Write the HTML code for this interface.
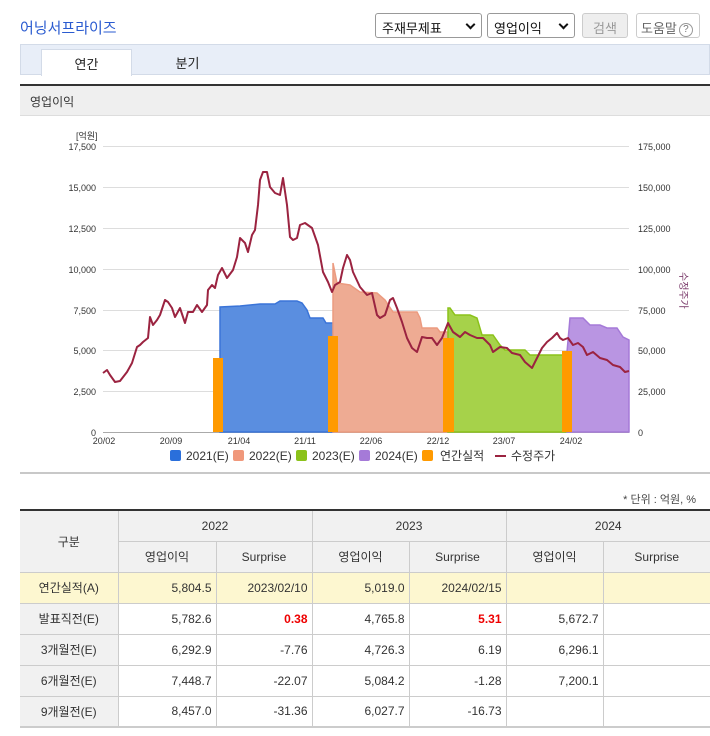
<!DOCTYPE html>
<html><head><meta charset="utf-8"><style>
*{margin:0;padding:0;box-sizing:border-box}
body{width:710px;height:736px;background:#fff;font-family:"Liberation Sans","Noto Sans CJK KR",sans-serif;font-size:12px;color:#333;position:relative;overflow:hidden}
.abs{position:absolute}
.title{left:20px;top:17px;font-size:15px;color:#2a5bd0}
.sel{top:13px;height:25px;border:1px solid #999;border-radius:3px;background:#fff;font-size:13px;color:#111;padding:4px 0 0 6px}
.sel:after{content:"";position:absolute;right:7px;top:7px;width:5px;height:5px;border-right:2px solid #111;border-bottom:2px solid #111;transform:rotate(45deg)}
.btn{top:13px;height:25px;border:1px solid #ccc;border-radius:3px;font-size:13px;color:#999;text-align:center;padding-top:4px;white-space:nowrap}
.tabs{left:20px;top:44px;width:690px;height:31px;background:#e8eef8;border:1px solid #d3dbe8}
.tab{top:49px;height:27px;font-size:13px;text-align:center;padding-top:4px;color:#222}
table{position:absolute;left:20px;top:509px;width:690px;border-collapse:collapse;border-top:2px solid #333;border-bottom:2px solid #ccc;table-layout:fixed}
td{border:1px solid #ccc;height:31px;font-size:12px;text-align:right;padding-right:4px;color:#333}
tr.h td{background:#f1f1f1;text-align:center;padding:0}
td.l{background:#f1f1f1;text-align:center;padding:0;border-left:none}
tr.y td{background:#fdf7d0}
.r{color:#e00;font-weight:bold}
</style></head><body>
<div class="abs title">어닝서프라이즈</div>
<div class="abs sel" style="left:375px;width:107px">주재무제표</div>
<div class="abs sel" style="left:487px;width:88px">영업이익</div>
<div class="abs btn" style="left:582px;width:46px;background:#eee">검색</div>
<div class="abs btn" style="left:636px;width:64px;color:#666;text-align:left;padding-left:4px">도움말<span style="display:inline-block;margin-left:2px;width:14px;height:14px;border:1px solid #999;border-radius:50%;font-size:10px;text-align:center;line-height:12px;color:#777;vertical-align:1px">?</span></div>
<div class="abs tabs"></div>
<div class="abs tab" style="left:41px;width:91px;background:#fff;border:1px solid #d3dbe8;border-bottom:none">연간</div>
<div class="abs tab" style="left:142px;width:91px">분기</div>
<div class="abs" style="left:20px;top:84px;width:690px;height:2px;background:#333"></div>
<div class="abs" style="left:20px;top:86px;width:690px;height:30px;background:#efefef;border-bottom:1px solid #ddd;padding:7px 0 0 10px;font-size:12px">영업이익</div>

<svg class="abs" style="left:0;top:0" width="710" height="480" font-family="Liberation Sans, sans-serif" font-size="9" fill="#333">
<g stroke="#ddd" stroke-width="1">
<line x1="103" x2="629" y1="146.5" y2="146.5"/><line x1="103" x2="629" y1="187.5" y2="187.5"/><line x1="103" x2="629" y1="228.5" y2="228.5"/><line x1="103" x2="629" y1="269.5" y2="269.5"/><line x1="103" x2="629" y1="310.5" y2="310.5"/><line x1="103" x2="629" y1="350.5" y2="350.5"/><line x1="103" x2="629" y1="391.5" y2="391.5"/>
</g>
<line x1="103" x2="629" y1="432.5" y2="432.5" stroke="#aaa"/>
<g text-anchor="end">
<text x="96" y="150">17,500</text><text x="96" y="191">15,000</text><text x="96" y="232">12,500</text><text x="96" y="273">10,000</text><text x="96" y="314">7,500</text><text x="96" y="354">5,000</text><text x="96" y="395">2,500</text><text x="96" y="436">0</text>
</g>
<text x="76" y="139">[억원]</text>
<g>
<text x="638" y="150">175,000</text><text x="638" y="191">150,000</text><text x="638" y="232">125,000</text><text x="638" y="273">100,000</text><text x="638" y="314">75,000</text><text x="638" y="354">50,000</text><text x="638" y="395">25,000</text><text x="638" y="436">0</text>
</g>
<text transform="translate(680,272) rotate(90)" fill="#7a3a6a" font-size="10" font-family="Noto Sans CJK KR, sans-serif">수정주가</text>
<g text-anchor="middle">
<text x="104" y="444">20/02</text><text x="171" y="444">20/09</text><text x="239" y="444">21/04</text><text x="305" y="444">21/11</text><text x="371" y="444">22/06</text><text x="438" y="444">22/12</text><text x="504" y="444">23/07</text><text x="571" y="444">24/02</text>
</g>
<path d="M220,432 L220,307 L240,306 L260,304 L275,304 L280,301 L297,301 L302,303 L307,310 L310,318 L323,318 L326,323 L333,323 L333,432Z" fill="#5a8ee0" stroke="#3a74d8" stroke-width="1.5"/>
<path d="M333,432 L333,263 L337,283 L350,285 L360,292 L377,293 L385,300 L393,312 L417,312 L420,318 L422,328 L437,328 L440,332 L448,332 L448,432Z" fill="#eeab93" stroke="#ec9b80" stroke-width="1.5"/>
<path d="M448,432 L448,308 L450,308 L455,315 L470,315 L477,318 L482,335 L493,335 L500,345 L505,350 L525,350 L530,355 L567,355 L567,432Z" fill="#a6d24a" stroke="#8bc21a" stroke-width="1.5"/>
<path d="M567,432 L567,352 L570,318 L583,318 L590,325 L600,325 L607,328 L617,328 L623,337 L629,340 L629,432Z" fill="#b995e2" stroke="#a57ad8" stroke-width="1.5"/>
<rect x="213" y="358" width="10" height="74" fill="#ff9a00"/>
<rect x="328" y="336" width="10" height="96" fill="#ff9a00"/>
<rect x="443" y="338" width="11" height="94" fill="#ff9a00"/>
<rect x="562" y="351" width="10" height="81" fill="#ff9a00"/>
<polyline fill="none" stroke="#9b2340" stroke-width="2" stroke-linejoin="round" points="103,373 107,370 110,375 115,382 120,381 127,372 132,363 137,347 140,345 143,342 148,338 150,317 153,325 157,320 160,315 165,300 168,302 172,308 175,317 180,308 185,323 188,312 193,312 197,305 202,312 207,305 208,290 212,285 215,288 218,275 222,268 227,278 233,270 237,257 240,238 245,243 248,252 252,235 255,230 258,205 260,180 263,172 267,172 270,187 275,193 280,195 283,178 287,205 290,237 293,240 297,238 300,225 305,223 312,228 318,245 323,272 328,282 332,292 335,285 340,282 343,268 347,255 350,260 353,272 360,287 367,295 372,293 377,315 380,318 385,315 390,300 393,298 397,308 402,322 407,338 412,348 417,352 422,337 427,338 432,338 437,345 442,338 448,323 453,332 460,337 465,332 470,335 477,338 483,338 490,345 493,352 500,347 507,348 512,353 520,355 525,362 532,368 537,358 542,348 547,342 552,338 557,333 560,338 563,340 568,338 573,345 578,343 583,347 587,355 593,352 600,358 607,360 613,365 620,367 625,372 629,371"/>
<g font-size="12" font-family="Liberation Sans, Noto Sans CJK KR, sans-serif" fill="#333">
<rect x="170" y="450" width="11" height="11" rx="2" fill="#2a6fdb"/><text x="186" y="460">2021(E)</text>
<rect x="233" y="450" width="11" height="11" rx="2" fill="#f0987b"/><text x="249" y="460">2022(E)</text>
<rect x="296" y="450" width="11" height="11" rx="2" fill="#8bc21a"/><text x="312" y="460">2023(E)</text>
<rect x="359" y="450" width="11" height="11" rx="2" fill="#a57ad8"/><text x="375" y="460">2024(E)</text>
<rect x="422" y="450" width="11" height="11" rx="2" fill="#ff9a00"/><text x="440" y="460">연간실적</text>
<rect x="495" y="455" width="11" height="2" fill="#9b2340"/><text x="511" y="460">수정주가</text>
</g>
<rect x="20" y="472" width="690" height="2" fill="#c8c8c8"/>
</svg>
<div class="abs" style="right:14px;top:491px;font-size:11px;color:#444">* 단위 : 억원, %</div>
<table>
<colgroup><col style="width:98px"><col style="width:98px"><col style="width:96px"><col style="width:97px"><col style="width:97px"><col style="width:97px"><col></colgroup>
<tr class="h"><td rowspan="2" style="border-left:none">구분</td><td colspan="2">2022</td><td colspan="2">2023</td><td colspan="2" style="border-right:none">2024</td></tr>
<tr class="h"><td>영업이익</td><td>Surprise</td><td>영업이익</td><td>Surprise</td><td>영업이익</td><td style="border-right:none">Surprise</td></tr>
<tr class="y"><td class="l" style="background:#fdf7d0">연간실적(A)</td><td>5,804.5</td><td>2023/02/10</td><td>5,019.0</td><td>2024/02/15</td><td></td><td style="border-right:none"></td></tr>
<tr><td class="l">발표직전(E)</td><td>5,782.6</td><td class="r">0.38</td><td>4,765.8</td><td class="r">5.31</td><td>5,672.7</td><td style="border-right:none"></td></tr>
<tr><td class="l">3개월전(E)</td><td>6,292.9</td><td>-7.76</td><td>4,726.3</td><td>6.19</td><td>6,296.1</td><td style="border-right:none"></td></tr>
<tr><td class="l">6개월전(E)</td><td>7,448.7</td><td>-22.07</td><td>5,084.2</td><td>-1.28</td><td>7,200.1</td><td style="border-right:none"></td></tr>
<tr><td class="l">9개월전(E)</td><td>8,457.0</td><td>-31.36</td><td>6,027.7</td><td>-16.73</td><td></td><td style="border-right:none"></td></tr>
</table>
</body></html>
